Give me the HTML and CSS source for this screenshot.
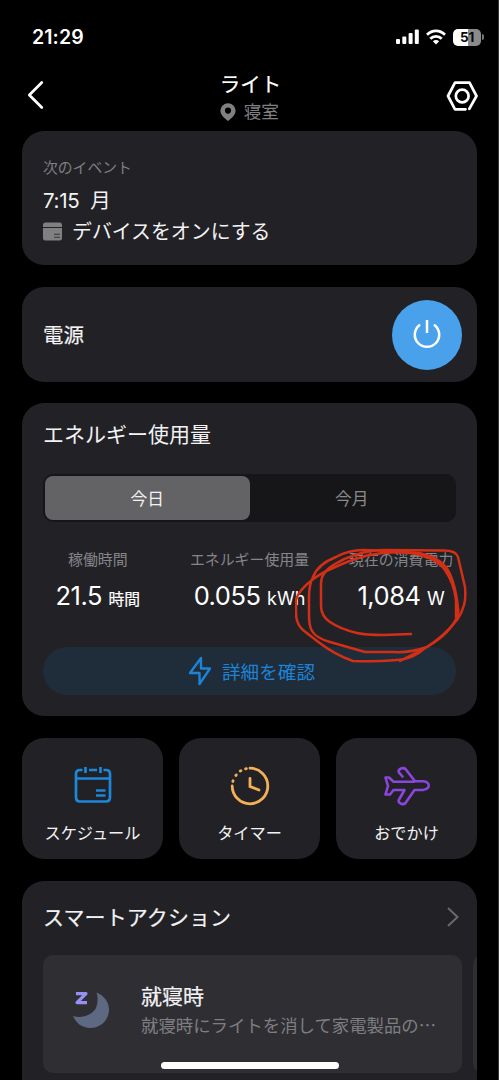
FILE: index.html
```html
<!DOCTYPE html>
<html lang="ja">
<head>
<meta charset="utf-8">
<title>ライト</title>
<link rel="stylesheet" href="styles.css">
</head>
<body>
<div class="screen">
  <div class="status">
    <span class="clock">21:29</span>
    <div class="status-icons">
      <svg width="24" height="16" viewBox="0 0 24 16" fill="#fff"><rect x="0" y="10" width="4" height="5" rx="1"/><rect x="6.3" y="7.5" width="4" height="7.5" rx="1"/><rect x="12.6" y="4" width="4" height="11" rx="1"/><rect x="18.8" y="0.5" width="4" height="14.5" rx="1"/></svg>
      <svg class="wifi" width="20" height="16" viewBox="0 0 20 16" fill="none" stroke="#fff" stroke-width="2.8"><path d="M1 5.8C6 .5 14 .5 19 5.8"/><path d="M4.3 9.8C7.5 6.500 12.500 6.500 15.700 9.800"/><path d="M6.800 12.300Q10 9.800 13.200 12.300L10 15.500Z" fill="#fff" stroke="none"/></svg>
      <div class="battery"><span>51</span></div>
      <i class="battery-cap"></i>
    </div>
  </div>
  <header class="nav">
    <svg width="20" height="30" viewBox="0 0 20 30" fill="none" stroke="#fff" stroke-width="2.700" stroke-linecap="round" stroke-linejoin="round"><path d="M16.800 2.500L4.300 15L16.800 27.500"/></svg>
    <div class="nav-title">
      <h1 class="medium">ライト</h1>
      <p><svg width="16" height="18" viewBox="0 0 16 18"><path fill="#818181" fill-rule="evenodd" d="M8 .2a7.600 7.600 0 0 0-7.600 7.600C.4 12 4.600 15.300 8 18c3.400-2.700 7.600-6 7.600-10.200A7.600 7.600 0 0 0 8 .2zm0 4.300a3.100 3.100 0 1 1 0 6.200a3.100 3.100 0 0 1 0-6.200z"/></svg>寝室</p>
    </div>
    <svg class="settings" width="32" height="30" viewBox="0 0 32 30" fill="none" stroke="#fff" stroke-width="2.700" stroke-linecap="round" stroke-linejoin="round"><path d="M19.500 28.300H9L2 15L9 1.700H23.500L30.500 15L23.300 27.800"/><circle cx="16.200" cy="15" r="6.400"/></svg>
  </header>

  <section class="card event">
    <p class="event-label">次のイベント</p>
    <p class="event-time">7:15&nbsp; 月</p>
    <p class="event-action"><svg width="19" height="19" viewBox="0 0 19 19"><path d="M0 5V3Q0 .5 2.500 .5H16.500Q19 .5 19 3V5ZM0 6H19V16Q19 18.500 16.500 18.500H2.500Q0 18.500 0 16Z" fill="#808083"/><path d="M11 12.300H17M11 15.200H17" stroke="#343438" stroke-width="1.100"/></svg>デバイスをオンにする</p>
  </section>

  <section class="card power">
    <h2 class="medium">電源</h2>
    <div class="power-button"><svg width="28" height="30" viewBox="0 0 28 30" fill="none" stroke="#fff" stroke-width="2.500"><path d="M14 0V13"/><path d="M6.300 5.200A12.200 12.200 0 1 0 21.700 5.200" stroke-linecap="round"/></svg></div>
  </section>

  <section class="card energy">
    <h2>エネルギー使用量</h2>
    <div class="segments"><span class="segment active">今日</span><span class="segment">今月</span></div>
    <div class="stats">
      <div><p>稼働時間</p><b>21.5 <small class="cjk">時間</small></b></div>
      <div><p>エネルギー使用量</p><b>0.055 <small>kWh</small></b></div>
      <div><p>現在の消費電力</p><b>1,084 <small>W</small></b></div>
    </div>
    <div class="detail"><svg width="24" height="30" viewBox="0 0 24 30" fill="none" stroke="#1d83d6" stroke-width="2.400" stroke-linejoin="round"><path d="M13 12V2L2 17H11.500V28L22 12.500H13ZM11.500 17V20"/></svg><span>詳細を確認</span></div>
    <svg class="scribble" width="175" height="120" viewBox="295 545 175 120" fill="none" stroke="#d32f17" stroke-width="2.500" stroke-linecap="round" stroke-linejoin="round">
      <path d="M411 634L383 635Q366 635 357 633Q340 629 330 622Q321 616 321 606V583Q321 572 335 564Q345 558 355 555Q370 550 385 550L442 550.500Q456 550 458 557L465 587Q466 598 464 605Q462 613 457 620Q444 636 427 647L400 661"/>
      <path d="M427 647Q410 653 393 652H365L330 642Q316 638 312 631Q309 626 309 615V597Q309 585 313 577Q318 564 336 557Q349 550 363 550Q395 551 419 553Q438 557 446 567Q455 580 458 608Q460 615 451 627Q443 638 425 648Q413 659 397 660Q375 662 353 661Q335 655 317 641L303 630Q296 624 296 613V600Q298 591 312 580Q321 573 333 568Q350 560 369 555Q390 551 410 553Q436 557 445 570Q454 583 456 600V617"/>
    </svg>
  </section>

  <div class="tiles">
    <section class="card tile"><svg width="38" height="38" viewBox="0 0 38 38" fill="none" stroke="#1d87da" stroke-width="2.700"><path d="M8.500 3H6Q2 3 2 7V30Q2 34.500 6 34.500H32Q36 34.500 36 30V7Q36 3 32 3H29.500M15 3H23M11.500 0V6M26.500 0V6M2 11.500H36M22 23.500H31.500M22 28.500H31.500"/></svg><span>スケジュール</span></section>
    <section class="card tile"><svg width="40" height="40" viewBox="0 0 40 40" fill="none" stroke="#f4b058" stroke-width="2.800" stroke-linecap="round"><path d="M20 2.200A17.800 17.800 0 1 1 2.200 20"/><path d="M2.800 15.500L3.100 14.700M5.800 9.500L6.300 8.900M10.300 5L11 4.600M15.600 2.800L16.400 2.600"/><path d="M20 12.500V20.500L29 24"/></svg><span>タイマー</span></section>
    <section class="card tile"><svg width="46" height="38" viewBox="0 0 46 38" fill="none" stroke="#8c45dc" stroke-width="2.600" stroke-linejoin="round" stroke-linecap="round"><path d="M18.500 9.500L14.800 5.400Q14 2.700 17 1.500Q20 .5 21.500 2L31 14.300H39Q44.500 14.800 44.800 18.500Q44.500 22 39 23H30.500L21.500 36Q19.500 38 16.500 36.500Q14 35 14.800 33L20.500 23H9.500L6 27.500H1.500L4 19L1.500 10.500H5L9.500 14.700H30"/></svg><span>おでかけ</span></section>
  </div>

  <section class="card smart">
    <div class="smart-head"><h2 class="medium">スマートアクション</h2><svg width="12" height="20" viewBox="0 0 12 20" fill="none" stroke="#69696c" stroke-width="2"><path d="M1 0L10.500 9L1 18"/></svg></div>
    <div class="carousel">
      <article class="action">
        <svg width="38" height="38" viewBox="0 0 38 38"><path d="M24.500 1.500C32 4.500 37 11 37 18.500C37 29 28.500 37 18.500 37C10 37 4 32 1 25C10 28 20 24 24 17Q27 9 24.500 1.500Z" fill="#5c6980"/><path d="M4 2.600H14L5 11.600H15" fill="none" stroke="#9790f4" stroke-width="3.200" stroke-linejoin="round"/></svg>
        <div class="action-text"><h3 class="medium">就寝時</h3><p>就寝時にライトを消して家電製品の<span class="dots">⋯</span></p></div>
      </article>
      <article class="action"></article>
    </div>
  </section>
  <div class="home-bar"></div>
</div>
</body>
</html>
```
FILE: styles.css
```css
* { box-sizing: border-box; }
body, h1, h2, h3, p { margin: 0; font-weight: 400; }
body { background: #000; }
svg { display: block; flex: none; }
.screen {
  position: relative;
  width: 499px;
  height: 1080px;
  padding: 0 21px 0 22px;
  overflow: hidden;
  background: #000;
  border-right: 1px solid #383838;
  color: #f2f2f4;
  font-family: Inter, "Noto Sans CJK JP", sans-serif;
  display: flex;
  flex-direction: column;
}
.medium { -webkit-text-stroke: .2px currentColor; }
.status {
  flex: none;
  display: flex;
  justify-content: space-between;
  height: 73px;
  padding: 25px 0 0 10px;
}
.clock { font-size: 19.5px; line-height: 24px; font-weight: 600; color: #fff; letter-spacing: .1px; }
.status-icons { display: flex; align-items: center; height: 24px; margin-right: -7px; }
.wifi { margin: 0 7px 0 6px; }
.battery {
  width: 28px;
  height: 17px;
  border-radius: 5px;
  background: linear-gradient(90deg, #fff 52%, #8a8a8a 52%);
  color: #080808;
  font-size: 13.5px;
  font-weight: 700;
  line-height: 17px;
  text-align: center;
  letter-spacing: -.3px;
}
.battery-cap { width: 2px; height: 6px; margin-left: 1px; border-radius: 0 2px 2px 0; background: #777; }
.nav { flex: none; display: flex; justify-content: space-between; height: 58px; padding: 0 0 0 3px; }
.nav > svg { margin-top: 7px; }
.nav > svg:first-child { margin-right: 10px; }
.nav > .settings { margin-top: 8px; margin-right: -1px; }
.nav-title { text-align: center; }
.nav-title h1 { font-size: 20.5px; line-height: 24px; color: #fff; }
.nav-title p { display: flex; align-items: center; gap: 8px; font-size: 17.6px; line-height: 28px; margin-top: 1px; color: #808080; }
.card { flex: none; background: #222226; border-radius: 22px; }
.card h2 { font-size: 21px; line-height: 30px; }
.event { height: 134px; padding: 27px 21px 0; margin-bottom: 22px; }
.event-label { font-size: 14.8px; line-height: 20px; color: #7f7f83; }
.event-time { margin-top: 8px; font-size: 20.5px; line-height: 30px; letter-spacing: -.3px; }
.event-action { display: flex; align-items: center; gap: 10px; margin-top: 1px; font-size: 19.9px; line-height: 30px; }
.event-action svg { margin-top: -2px; }
.power { height: 95px; margin-bottom: 21px; padding: 0 15px 0 21px; display: flex; align-items: center; justify-content: space-between; }
.card.power h2 { margin-top: 2px; font-size: 20.5px; }
.power-button { width: 70px; height: 70px; border-radius: 50%; background: #49a1ec; display: flex; align-items: center; justify-content: center; }
.energy { position: relative; height: 313px; padding: 17px 21px 0; margin-bottom: 22px; }
.segments { display: flex; height: 48px; margin-top: 24px; padding: 2px; border-radius: 10px; background: #161618; }
.segment { flex: 1; padding-top: 1px; font-size: 16.7px; line-height: 44px; text-align: center; color: #8a8a8e; border-radius: 8px; height: 44px; }
.segment.active { background: #636366; color: #f2f2f4; }
.stats { display: grid; grid-template-columns: repeat(3, 1fr); margin: 28px -21px 0; text-align: center; }
.stats p { font-size: 14.9px; line-height: 20px; color: #85858a; }
.stats b { display: block; margin-top: 8px; font-size: 25.5px; line-height: 36px; height: 36px; font-weight: 400; letter-spacing: -.5px; color: #fff; white-space: nowrap; }
.stats small { font-size: 18px; letter-spacing: 0; }
.stats small.cjk { font-size: 15.8px; -webkit-text-stroke: .2px currentColor; }
.detail { display: flex; align-items: center; justify-content: center; gap: 10px; height: 48px; margin-top: 33px; padding-left: 4px; border-radius: 24px; background: #1f2c39; color: #1d83d6; font-size: 18.6px; line-height: 28px; }
.detail span { margin-top: 1px; }
.scribble { position: absolute; left: 273px; top: 142px; }
.tiles { flex: none; display: grid; grid-template-columns: repeat(3, 1fr); gap: 16px; margin-bottom: 22px; }
.tile { display: flex; flex-direction: column; align-items: center; height: 121px; padding-top: 28px; }
.tile svg { height: 40px; overflow: visible; }
.tile span { margin-top: 15px; font-size: 16.2px; line-height: 24px; }
.smart { height: 260px; padding: 22px 0 0 21px; overflow: hidden; }
.smart-head { display: flex; align-items: center; justify-content: space-between; padding-right: 18px; }
.smart-head svg { overflow: visible; }
.smart-head h2 { letter-spacing: .1px; }
.carousel { display: flex; gap: 11px; margin-top: 22px; }
.action { flex: none; width: 419px; height: 118px; border-radius: 10px; background: #2f2f33; display: flex; padding: 28px 0 0 29px; }
.action svg { margin-top: 8px; }
.action-text { margin-left: 31px; }
.action h3 { font-size: 21px; line-height: 28px; }
.action p { margin-top: 1px; font-size: 17.400px; line-height: 26px; color: #7e7e82; }
.dots { font-family: "Noto Sans CJK JP", sans-serif; }
.home-bar { position: absolute; left: 161px; top: 1062px; width: 178px; height: 7px; border-radius: 4px; background: #fff; }
```
